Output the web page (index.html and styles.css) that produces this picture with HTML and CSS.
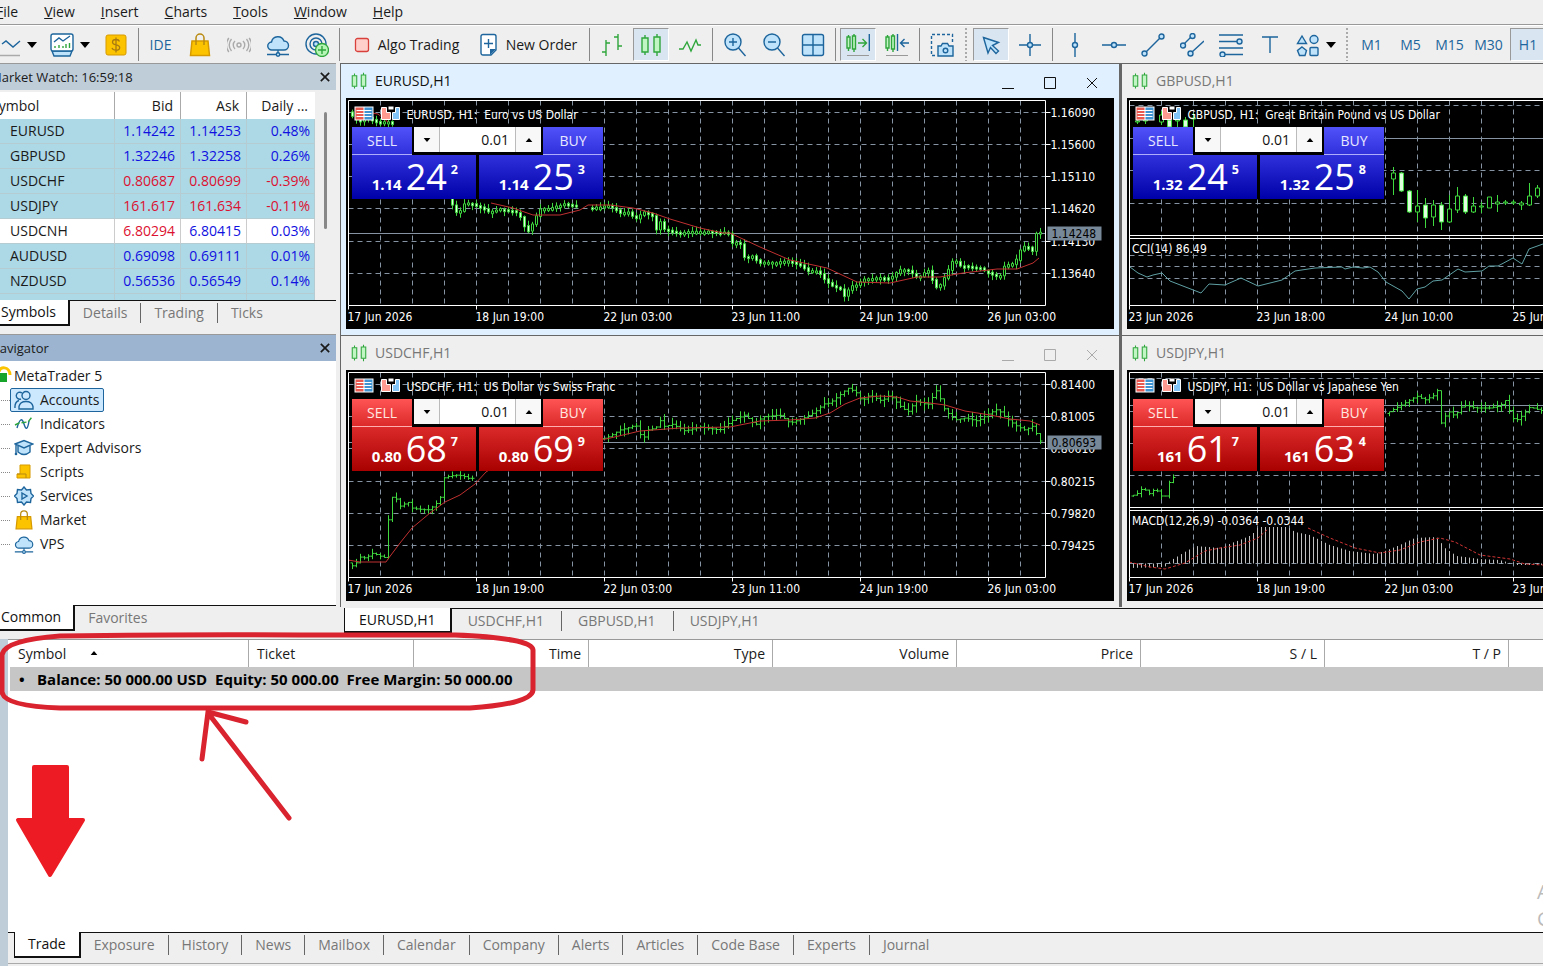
FILE: index.html
```html
<!DOCTYPE html>
<html lang="en">
<head>
<meta charset="utf-8">
<title>MetaTrader 5</title>
<link rel="stylesheet" href="styles.css">
</head>
<body>
<svg class="defs" aria-hidden="true">
  <symbol id="i-candles" viewBox="0 0 24 24"><path d="M6 2v3M6 19v3M18 1v3M18 19v4" class="gs"/><path d="M3 5h6v14H3zM15 4h6v15h-6z" class="gs gf"/></symbol>
  <symbol id="i-cloud" viewBox="0 0 24 24"><path d="M6 17a4 4 0 0 1-.5-8A6.500 6.500 0 0 1 18 8a4.500 4.500 0 0 1 0 9z" class="bs bf"/><path d="M12 17v3M1 21.500h9M14 21.500h9" class="bs"/><circle cx="12" cy="21.500" r="1.700" class="bs bf"/></symbol>
  <symbol id="i-bag" viewBox="0 0 24 24"><path d="M4 8h16l1.500 14.500h-19z" fill="#fcc400" stroke="#d79a00" stroke-width="1.500"/><path d="M8 12V5a4 4 0 0 1 8 0v7" fill="none" stroke="#b98a10" stroke-width="1.500"/></symbol>
  <symbol id="i-down" viewBox="0 0 10 6"><path d="M0 0h10L5 6z"/></symbol>
  <symbol id="i-x" viewBox="0 0 12 12"><path d="M1 1l10 10M11 1L1 11" fill="none" stroke="currentColor"/></symbol>
</svg>

<div class="app">
  <nav class="menu">
    <button><u>F</u>ile</button><button><u>V</u>iew</button><button><u>I</u>nsert</button><button><u>C</u>harts</button><button><u>T</u>ools</button><button><u>W</u>indow</button><button><u>H</u>elp</button>
  </nav>

  <div class="toolbar">
    <button class="tb drop" aria-label="Line tools"><svg class="ic" viewBox="0 0 24 24"><path d="M2 2v21M2 22.500h21" stroke="#aaa" fill="none" stroke-width="1.300"/><path d="M5 11l4-3 7 6 7-6" class="bs"/></svg><svg class="dn"><use href="#i-down"/></svg></button>
    <button class="tb drop" aria-label="Templates"><svg class="ic" viewBox="0 0 24 24"><path d="M2 18l2 5h16l2-5z" class="bs bf"/><rect x="1" y="1" width="22" height="17" rx="2" fill="#fff" stroke="#1d659c" stroke-width="1.400"/><path d="M4 9l5-4 4 3 7-5" class="bs"/><path d="M5 15v-2M9 15v-3M13 15v-2M16 15v-4M19.500 15v-5" class="gs"/></svg><svg class="dn"><use href="#i-down"/></svg></button>
    <button class="tb" aria-label="Deposit"><svg class="ic" viewBox="0 0 24 24"><rect x="2" y="2" width="20" height="20" rx="2" fill="#fcc400" stroke="#d79a00"/><path d="M15.500 8.500C15 7 13.500 6.500 12 6.500c-2 0-3.500 1-3.500 2.700 0 3.600 7.200 1.800 7.200 5.300 0 1.800-1.600 2.700-3.700 2.700-2 0-3.500-.7-4-2.300M12 4.500v15" fill="none" stroke="#a87a10" stroke-width="1.300"/></svg></button>
    <i class="sep"></i>
    <button class="tb blue">IDE</button>
    <button class="tb" aria-label="Market"><svg class="ic"><use href="#i-bag"/></svg></button>
    <button class="tb" aria-label="Signals"><svg class="ic" viewBox="0 0 24 24"><g fill="none" stroke="#aaa" stroke-width="1.400"><circle cx="12" cy="12" r="2"/><path d="M8 16a5.500 5.500 0 0 1 0-8M16 8a5.500 5.500 0 0 1 0 8M4.500 18a9 9 0 0 1 0-12M19.500 6a9 9 0 0 1 0 12M1.800 19a12 12 0 0 1 0-14M22.200 5a12 12 0 0 1 0 14"/></g></svg></button>
    <button class="tb" aria-label="Virtual hosting"><svg class="ic"><use href="#i-cloud"/></svg></button>
    <button class="tb" aria-label="Connect"><svg class="ic" viewBox="0 0 24 24"><circle cx="11" cy="11" r="10" class="bs"/><circle cx="11" cy="11" r="6" class="bs"/><circle cx="11" cy="11" r="2.500" class="bs bf"/><circle cx="17" cy="17" r="6.500" fill="#b6f5b6" stroke="#2fa63c" stroke-width="1.300"/><path d="M17 13v8M13 17h8" class="gs"/></svg></button>
    <i class="sep"></i>
    <button class="tb label algo"><svg class="ic s16" viewBox="0 0 16 16"><rect x="1.500" y="1.500" width="13" height="13" rx="2" fill="#ffd0cb" stroke="#d8403c" stroke-width="1.300"/></svg>Algo Trading</button>
    <button class="tb label order"><svg class="ic narrow" viewBox="0 0 18 24"><path d="M3 1.500h11a2 2 0 0 1 2 2V17l-5 5H3a2 2 0 0 1-2-2V3.500a2 2 0 0 1 2-2z" fill="#fff" stroke="#1d659c" stroke-width="1.400"/><path d="M16 16h-6v6z" fill="#1d659c"/><path d="M8.500 6v9M4 10.500h9" class="bs"/></svg>New Order</button>
    <i class="sep"></i>
    <button class="tb" aria-label="Bar chart"><svg class="ic" viewBox="0 0 24 24"><path d="M6 7v16M6 10h4M2 19h4M18 1v16M14 4h4M18 13h4" class="gs"/></svg></button>
    <button class="tb on" aria-label="Candlesticks"><svg class="ic"><use href="#i-candles"/></svg></button>
    <button class="tb" aria-label="Line chart"><svg class="ic" viewBox="0 0 24 24"><path d="M1 16h4l4-7 4 9 5-11 2 5h3" class="gs"/></svg></button>
    <i class="sep"></i>
    <button class="tb" aria-label="Zoom in"><svg class="ic" viewBox="0 0 24 24"><circle cx="10" cy="9" r="8" class="bs bf"/><path d="M6 9h8M10 5v8M15.500 15l7 8" class="bs"/></svg></button>
    <button class="tb" aria-label="Zoom out"><svg class="ic" viewBox="0 0 24 24"><circle cx="10" cy="9" r="8" class="bs bf"/><path d="M6 9h8M15.500 15l7 8" class="bs"/></svg></button>
    <button class="tb" aria-label="Tile windows"><svg class="ic" viewBox="0 0 24 24"><rect x="1.500" y="1.500" width="21" height="21" rx="2" class="bs bf"/><path d="M12 2v20M2 12h20" class="bs"/></svg></button>
    <i class="sep"></i>
    <button class="tb on" aria-label="Auto scroll"><svg class="ic" viewBox="0 0 24 24"><path d="M2.500 2v16M8 1v18" class="gs"/><path d="M1 4h3v11H1zM6.500 3h3v13h-3z" class="gs gf"/><path d="M12 10h8M16.500 6l4 4-4 4" class="gs"/><path d="M23.300 1v17" class="bs"/><path d="M1 22.500h22" stroke="#999"/></svg></button>
    <button class="tb" aria-label="Chart shift"><svg class="ic" viewBox="0 0 24 24"><path d="M2.500 2v16M8 1v18" class="gs"/><path d="M1 4h3v11H1zM6.500 3h3v13h-3z" class="gs gf"/><path d="M12.500 1v17M24 10h-8M19.500 6l-4 4 4 4" class="bs"/><path d="M1 22.500h22" stroke="#999"/></svg></button>
    <i class="sep"></i>
    <button class="tb" aria-label="Screenshot"><svg class="ic" viewBox="0 0 24 24"><path d="M5 22.500H1.500v-21h21V9" class="bs" stroke-dasharray="3 2"/><path d="M8 13h3l1.500-2.500h5L19 13h4v10H8z" class="bs bf"/><circle cx="15.500" cy="17.500" r="2.300" class="bs"/></svg></button>
    <i class="sep dot"></i>
    <button class="tb on" aria-label="Cursor"><svg class="ic" viewBox="0 0 24 24"><path d="M4.500 4.500l15 5-6 3 6 5.500-2.500 2.500-5.500-6-2.500 5.500z" class="bs bf"/></svg></button>
    <button class="tb" aria-label="Crosshair"><svg class="ic" viewBox="0 0 24 24"><path d="M12 1v8M12 15v8M1 12h8M15 12h8" class="bs"/><circle cx="12" cy="12" r="2.500" class="bs bf"/></svg></button>
    <i class="sep"></i>
    <button class="tb" aria-label="Vertical line"><svg class="ic" viewBox="0 0 24 24"><path d="M12 0v9M12 15v9" class="bs"/><circle cx="12" cy="12" r="2.500" class="bs bf"/></svg></button>
    <button class="tb" aria-label="Horizontal line"><svg class="ic" viewBox="0 0 24 24"><path d="M0 12h9M15 12h9" class="bs"/><circle cx="12" cy="12" r="2.500" class="bs bf"/></svg></button>
    <button class="tb" aria-label="Trend line"><svg class="ic" viewBox="0 0 24 24"><path d="M5 19L19 5" class="bs"/><circle cx="3.500" cy="20.500" r="2.500" class="bs bf"/><circle cx="20.500" cy="3.500" r="2.500" class="bs bf"/></svg></button>
    <button class="tb" aria-label="Channel"><svg class="ic" viewBox="0 0 24 24"><path d="M4 11l7-7M12 19L24 8" class="bs"/><circle cx="3" cy="12.500" r="2.500" class="bs bf"/><circle cx="12.500" cy="3" r="2.500" class="bs bf"/><circle cx="10.500" cy="20.500" r="2.500" class="bs bf"/></svg></button>
    <button class="tb" aria-label="Fibonacci"><svg class="ic" viewBox="0 0 24 24"><path d="M0 2h24M0 8.500h18M0 15h24M6 21.500h18" class="bs"/><circle cx="20.500" cy="8.500" r="2.500" class="bs bf"/><circle cx="3.500" cy="21.500" r="2.500" class="bs bf"/></svg></button>
    <button class="tb" aria-label="Text"><svg class="ic" viewBox="0 0 24 24"><path d="M4 4h16M12 4v16" class="bs"/></svg></button>
    <button class="tb drop" aria-label="Shapes"><svg class="ic" viewBox="0 0 24 24"><path d="M6 3l4.500 7.500h-9zM6 14l4.500 3.500L9 22.500H3.500l-2-5z" class="bs bf"/><circle cx="18" cy="6.500" r="4" class="bs bf"/><rect x="14" y="14.500" width="8" height="8" rx="1" class="bs bf"/></svg><svg class="dn"><use href="#i-down"/></svg></button>
    <i class="sep dot"></i>
    <button class="tb blue">M1</button><button class="tb blue">M5</button><button class="tb blue">M15</button><button class="tb blue">M30</button><button class="tb blue on">H1</button>
  </div>

  <main class="work">
    <aside class="side">
      <section class="watch">
        <header class="cap"><span>Market Watch: 16:59:18</span><button aria-label="Close Market Watch"><svg class="x bold"><use href="#i-x"/></svg></button></header>
        <div class="quotes">
          <table>
            <colgroup><col class="c-sym"><col class="c-num"><col class="c-num"><col class="c-day"></colgroup>
            <thead><tr><th>Symbol</th><th>Bid</th><th>Ask</th><th>Daily ...</th></tr></thead>
            <tbody>
              <tr><td>EURUSD</td><td>1.14242</td><td>1.14253</td><td>0.48%</td></tr>
              <tr><td>GBPUSD</td><td>1.32246</td><td>1.32258</td><td>0.26%</td></tr>
              <tr><td>USDCHF</td><td class="r">0.80687</td><td class="r">0.80699</td><td class="r">-0.39%</td></tr>
              <tr><td>USDJPY</td><td class="r">161.617</td><td class="r">161.634</td><td class="r">-0.11%</td></tr>
              <tr class="plain"><td>USDCNH</td><td class="r">6.80294</td><td>6.80415</td><td>0.03%</td></tr>
              <tr><td>AUDUSD</td><td>0.69098</td><td>0.69111</td><td>0.01%</td></tr>
              <tr><td>NZDUSD</td><td>0.56536</td><td>0.56549</td><td>0.14%</td></tr>
              <tr><td></td><td></td><td></td><td></td></tr>
            </tbody>
          </table>
          <div class="track"><i class="thumb"></i></div>
        </div>
        <div class="tabs"><button class="active first">Symbols</button><button>Details</button><button>Trading</button><button>Ticks</button></div>
      </section>

      <section class="nav">
        <header class="cap strong"><span>Navigator</span><button aria-label="Close Navigator"><svg class="x bold"><use href="#i-x"/></svg></button></header>
        <ul class="tree">
          <li class="root"><svg viewBox="0 0 20 20"><path d="M7 6c0-6 11-6 11 3" fill="none" stroke="#fcc400" stroke-width="3"/><path d="M3 7h12v9H3z" fill="#17a42a"/></svg><span>MetaTrader 5</span></li>
          <li><i></i><a href="#accounts" class="sel"><svg viewBox="0 0 20 20"><circle cx="12" cy="5.500" r="4" class="bs"/><path d="M5 19v-2.500q1-5 7-5t7 5V19zM7 9a3.500 3.500 0 1 1 1-6M1 18q-.5-6 4-7.500" class="bs"/></svg>Accounts</a></li>
          <li><i></i><a href="#indicators"><svg viewBox="0 0 20 20"><path d="M3 14q4-14 7-4t5-3" class="bs"/><path d="M1 11l4-2 9-1 4-5" class="gs" stroke-dasharray="5 2"/></svg>Indicators</a></li>
          <li><i></i><a href="#experts"><svg viewBox="0 0 20 20"><path d="M4 8v6q6 5 12 0V8" class="bs bf"/><path d="M1 6l9-3.500L19 6l-9 4zM2 7v9" class="bs bf"/><circle cx="2" cy="16" r="1.300" fill="#1d659c"/></svg>Expert Advisors</a></li>
          <li><i></i><a href="#scripts"><svg viewBox="0 0 20 20"><path d="M6 3h10v13H3v-4h3z" fill="#fcc400" stroke="#d79a00"/><path d="M3 12h9v4" fill="none" stroke="#b98a10"/></svg>Scripts</a></li>
          <li><i></i><a href="#services"><svg viewBox="0 0 20 20"><path d="M10 1l2.500 3 4-.5.500 4 2.500 2.500-2.500 2.500-.5 4-4-.5L10 19l-2.500-3-4 .5-.5-4L.5 10 3 7.500l.5-4 4 .5z" class="bs bf"/><path d="M8 7l5 3-5 3z" class="bs"/></svg>Services</a></li>
          <li><i></i><a href="#market"><svg><use href="#i-bag"/></svg>Market</a></li>
          <li><i></i><a href="#vps"><svg><use href="#i-cloud"/></svg>VPS</a></li>
        </ul>
        <div class="tabs"><button class="active first">Common</button><button>Favorites</button></div>
      </section>
    </aside>

    <section class="mdi">
      <div class="windows">
        <article class="win active">
          <header><svg class="wi"><use href="#i-candles"/></svg><h2>EURUSD,H1</h2><button aria-label="Minimize"><svg class="x" viewBox="0 0 12 12"><path d="M0 11.500h12" stroke="currentColor"/></svg></button><button aria-label="Maximize"><svg class="x" viewBox="0 0 12 12"><path d="M.5.500h11v11H.500z" fill="none" stroke="currentColor"/></svg></button><button aria-label="Close"><svg class="x"><use href="#i-x"/></svg></button></header>
          <div class="chart"><svg class="plot" id="eurusd" viewBox="346 98 769 231"></svg>
            <div class="trade"><button class="side-btn">SELL</button><div class="lot"><button aria-label="Less"><svg class="ar"><use href="#i-down"/></svg></button><input aria-label="Volume" value="0.01"><button aria-label="More"><svg class="ar up"><use href="#i-down"/></svg></button></div><button class="side-btn">BUY</button>
              <div class="prices"><button class="price">1.14<b>24</b><sup>2</sup></button><button class="price">1.14<b>25</b><sup>3</sup></button></div></div></div>
        </article>
        <article class="win">
          <header><svg class="wi"><use href="#i-candles"/></svg><h2>GBPUSD,H1</h2></header>
          <div class="chart"><svg class="plot" id="gbpusd" viewBox="1127 98 769 231"></svg>
            <div class="trade"><button class="side-btn">SELL</button><div class="lot"><button aria-label="Less"><svg class="ar"><use href="#i-down"/></svg></button><input aria-label="Volume" value="0.01"><button aria-label="More"><svg class="ar up"><use href="#i-down"/></svg></button></div><button class="side-btn">BUY</button>
              <div class="prices"><button class="price">1.32<b>24</b><sup>5</sup></button><button class="price">1.32<b>25</b><sup>8</sup></button></div></div></div>
        </article>
        <article class="win">
          <header><svg class="wi"><use href="#i-candles"/></svg><h2>USDCHF,H1</h2><button aria-label="Minimize"><svg class="x" viewBox="0 0 12 12"><path d="M0 11.500h12" stroke="currentColor"/></svg></button><button aria-label="Maximize"><svg class="x" viewBox="0 0 12 12"><path d="M.5.500h11v11H.500z" fill="none" stroke="currentColor"/></svg></button><button aria-label="Close"><svg class="x"><use href="#i-x"/></svg></button></header>
          <div class="chart"><svg class="plot" id="usdchf" viewBox="346 370 769 231"></svg>
            <div class="trade red"><button class="side-btn">SELL</button><div class="lot"><button aria-label="Less"><svg class="ar"><use href="#i-down"/></svg></button><input aria-label="Volume" value="0.01"><button aria-label="More"><svg class="ar up"><use href="#i-down"/></svg></button></div><button class="side-btn">BUY</button>
              <div class="prices"><button class="price">0.80<b>68</b><sup>7</sup></button><button class="price">0.80<b>69</b><sup>9</sup></button></div></div></div>
        </article>
        <article class="win">
          <header><svg class="wi"><use href="#i-candles"/></svg><h2>USDJPY,H1</h2></header>
          <div class="chart"><svg class="plot" id="usdjpy" viewBox="1127 370 769 231"></svg>
            <div class="trade red"><button class="side-btn">SELL</button><div class="lot"><button aria-label="Less"><svg class="ar"><use href="#i-down"/></svg></button><input aria-label="Volume" value="0.01"><button aria-label="More"><svg class="ar up"><use href="#i-down"/></svg></button></div><button class="side-btn">BUY</button>
              <div class="prices"><button class="price">161<b>61</b><sup>7</sup></button><button class="price">161<b>63</b><sup>4</sup></button></div></div></div>
        </article>
      </div>
      <div class="tabs wide"><button class="active">EURUSD,H1</button><button>USDCHF,H1</button><button>GBPUSD,H1</button><button>USDJPY,H1</button></div>
    </section>
  </main>

  <section class="toolbox">
    <div class="body">
      <table>
        <colgroup><col class="t1"><col class="t2"><col class="t3"><col class="t4"><col class="t4"><col class="t4"><col class="t4"><col class="t4"><col></colgroup>
        <thead><tr><th>Symbol<svg class="ar up sort"><use href="#i-down"/></svg></th><th>Ticket</th><th>Time</th><th>Type</th><th>Volume</th><th>Price</th><th>S / L</th><th>T / P</th><th></th></tr></thead>
        <tbody><tr><td colspan="9"><span class="bul">•</span>Balance: 50 000.00 USD&nbsp; Equity: 50 000.00&nbsp; Free Margin: 50 000.00</td></tr></tbody>
      </table>
      <div class="mark">Activate Windows<br>Go to Settings</div>
    </div>
    <div class="tabs low"><button class="active">Trade</button><button>Exposure</button><button>History</button><button>News</button><button>Mailbox</button><button>Calendar</button><button>Company</button><button>Alerts</button><button>Articles</button><button>Code Base</button><button>Experts</button><button>Journal</button></div>
  </section>
</div>

<svg class="notes" width="560" height="900" viewBox="0 0 560 900" aria-hidden="true">
  <g fill="none" stroke="#d9232e" stroke-width="5" stroke-linecap="round">
    <path d="M60 636Q200 634 300 635H455Q532 638 533 650V690Q532 704 470 708H60Q4 706 2 692V655Q4 640 60 636z"/>
    <path d="M289 818L208 713M202 759l6-47 38 10"/>
  </g>
  <path d="M34 767h33v53h16L50 875 18 820h16z" fill="#ed1c24" stroke="#ed1c24" stroke-width="4" stroke-linejoin="round"/>
</svg>
<script src="charts.js"></script>
</body>
</html>
```

FILE: styles.css
```css
* { box-sizing: border-box; }
body { margin: 0; overflow: hidden; background: #efefef; color: #1a1a1a; font: 14px/20px "Open Sans", "Noto Sans", sans-serif; }
button, input { font: inherit; color: inherit; border: 0; padding: 0; margin: 0; background: none; }
h2, ul { margin: 0; padding: 0; font-weight: 400; list-style: none; }
table { border-collapse: separate; border-spacing: 0; table-layout: fixed; }
td, th { padding: 0; font-weight: 400; white-space: nowrap; }
svg { display: block; flex: none; }
.defs { position: absolute; width: 0; height: 0; }
.bs { fill: none; stroke: #1d659c; stroke-width: 1.4; }
.bf { fill: #bfe3fb; }
.gs { fill: none; stroke: #2fa63c; stroke-width: 1.4; }
.gf { fill: #c2f5c4; }

.app { margin-left: -16px; min-height: 100vh; display: flex; flex-direction: column; overflow: hidden; }

.menu { height: 25px; padding-left: 12px; display: flex; gap: 26px; border-bottom: 1px solid #999; }
.toolbar { height: 38px; padding: 2px 0 2px 6px; display: flex; border-top: 1px solid #fff; }
.tb { flex: none; width: 39px; display: flex; align-items: center; justify-content: center; }
.tb.drop { width: 53px; gap: 6px; }
.tb.label { gap: 8px; }
.tb.algo { width: 129px; }
.tb.order { width: 115px; }
.tb.blue { color: #1d659c; }
.tb.on { width: 36px; margin: 0 1px 0 2px; background: #d9e5f1; border: 1px solid #fff; border-top-color: #999; border-left-color: #999; }
.ic { width: 24px; height: 24px; }
.ic.s16 { width: 16px; height: 16px; }
.ic.narrow { width: 18px; }
.dn { width: 10px; height: 6px; }
.sep { flex: none; width: 6px; background: linear-gradient(#888, #888) center / 1px 100% no-repeat; }
.sep.dot { width: 10px; background: repeating-linear-gradient(#aaa 0 2px, transparent 2px 4px) center / 2px 100% no-repeat; }

.work { display: flex; height: 576px; }
.side { flex: none; width: 352px; margin-right: 4px; display: flex; flex-direction: column; }
.cap { height: 27px; padding: 0 6px; display: flex; align-items: center; justify-content: space-between; background: #bfcdd9; border-top: 1px solid #999; font-size: 13px; }
.cap.strong { background: #9cb4cf; }
.x { width: 12px; height: 12px; overflow: visible; }
.x.bold { width: 10px; height: 10px; stroke-width: 2; }
.quotes { display: flex; align-items: flex-start; height: 210px; padding-top: 2px; overflow: hidden; }
.quotes table { width: 331px; }
.c-sym { width: 131px; }
.c-num { width: 66px; }
.c-day { width: 68px; }
.quotes th { height: 27px; background: #fff; text-align: right; padding-right: 7px; border-right: 1px solid #aaa; }
.quotes th:first-child { text-align: left; padding-left: 7px; }
.quotes th:last-child { border: 0; }
.quotes td { height: 25px; background: #add8e6; color: #1010e0; text-align: right; padding-right: 5px; border-bottom: 1px solid #b5ccd3; border-right: 1px solid #b5ccd3; }
.quotes td:first-child { text-align: left; padding-left: 26px; color: #1a1a1a; }
.quotes td:last-child { padding-right: 4px; }
.quotes td.r { color: #dc1030; }
.quotes .plain td { background: #fff; border-right-color: #ccc; }
.track { flex: 1; padding: 20px 9px 0; }
.thumb { display: block; width: 3px; height: 117px; border-radius: 2px; background: #888; }

.tabs { display: flex; border-top: 1px solid #111; height: 34px; }
.tabs button { height: 20px; margin-top: 2px; padding: 0 13px; color: #777; border-right: 1px solid #666; }
.tabs button:last-child { border: 0; }
.tabs .active { height: 26px; margin-top: -1px; padding: 0 12px; background: #fff; color: #111; border: 1px solid #111; border-top: 0; border-right-width: 2px; border-bottom-width: 2px; }
.tabs .first { padding-left: 16px; }
.nav { display: flex; flex-direction: column; flex: 1; }
.tree { flex: 1; background: #fff; padding: 3px 0 0 8px; }
.tree li { height: 24px; display: flex; align-items: center; }
.tree svg { width: 20px; height: 20px; }
.tree .root svg { margin-right: 2px; }
.tree i { width: 18px; border-top: 1px dotted #888; }
.tree a { display: flex; align-items: center; gap: 6px; height: 24px; padding: 0 3px; color: inherit; text-decoration: none; border: 1px solid transparent; }
.tree .sel { background: #cce8ff; border-color: #1d659c; border-radius: 2px; }

.mdi { flex: 1; min-width: 0; display: flex; flex-direction: column; overflow: hidden; }
.windows { display: grid; grid-template-columns: 781px minmax(781px, 1fr); grid-auto-rows: 272px; }
.win { border: 1px solid #666; border-width: 1px 2px 0 1px; padding: 0 5px 5px; background: #efefef; color: #777; }
.win.active { background: #e0f0fe; color: #111; }
.win header { display: flex; align-items: center; height: 34px; padding: 0 1px 0 4px; }
.wi { width: 18px; height: 20px; margin-right: 7px; }
.win h2 { flex: 1; font-size: 14px; }
.win header button { width: 42px; display: flex; justify-content: center; padding-top: 4px; color: #aaa; }
.win.active header button { color: #111; }
.chart { position: relative; background: #000; height: 231px; overflow: hidden; }
.plot { width: 769px; height: 231px; font: 12px "DejaVu Sans Condensed", "Noto Sans", sans-serif; }
.trade { position: absolute; left: 6px; top: 29px; width: 251px; display: grid; grid-template-columns: 60px minmax(0, 1fr) 60px; column-gap: 2px; background: #000; color: #e8e8ff; --a: #5252fa; --b: #3131dc; --c: #0000a8; }
.trade.red { color: #ffe8e0; --a: #ff5454; --b: #dc2a2a; --c: #a80000; }
.side-btn { height: 28px; background: linear-gradient(var(--a), var(--b)); border-bottom: 1px solid #ffffff88; }
.lot { display: flex; height: 25px; background: #fff; color: #111; }
.lot button { flex: none; width: 25px; display: flex; align-items: center; justify-content: center; background: #f8f8f8; }
.lot input { flex: 1; width: 0; min-width: 0; text-align: right; padding-right: 6px; border: 1px solid #bbb; border-width: 0 1px; }
.ar { width: 8px; height: 4px; }
.ar.up { transform: rotate(180deg); }
.prices { grid-column: 1 / 4; display: grid; grid-template-columns: 1fr 1fr; column-gap: 3px; }
.price { height: 44px; background: linear-gradient(var(--b), var(--c)); color: #fff; display: flex; align-items: baseline; justify-content: flex-end; padding-right: 18px; font: 700 15px/44px "Open Sans", "Noto Sans", sans-serif; }
.price b { font-size: 36px; font-weight: 400; margin: 0 4px; }
.price sup { align-self: flex-start; line-height: 30px; }
.tabs.wide { margin: 1px 0 0 4px; height: 32px; }
.tabs.wide button { padding: 0 17px 0 16px; }
.tabs.wide .active { padding: 0 14px; height: 25px; }

.toolbox { flex: 1; display: flex; flex-direction: column; border-left: 24px solid #bfcdd9; padding-bottom: 2px; }
.body { position: relative; flex: 1; background: #fff; border-top: 1px solid #999; padding-left: 2px; }
.body table { width: 100%; }
.t1 { width: 239px; }
.t2 { width: 165px; }
.t3 { width: 175px; }
.t4 { width: 184px; }
.body th { height: 27px; text-align: right; padding-right: 7px; border-right: 1px solid #aaa; }
.body th:nth-child(-n+2) { text-align: left; padding-left: 8px; }
.body th:last-child { border: 0; }
.sort { display: inline-block; margin: 0 0 4px 24px; }
.body td { height: 24px; background: #c6c6c6; color: #000; font: 700 15px/20px "Open Sans", "Noto Sans", sans-serif; }
.bul { display: inline-block; width: 27px; padding-left: 9px; }
.mark { position: absolute; left: calc(100% - 6px); bottom: 0; font-size: 20px; line-height: 27px; color: #bbb; white-space: nowrap; }
.tabs.low { height: 32px; padding-left: 6px; border-bottom: 1px solid #aaa; }
.tabs.low button { padding: 0 13px; }
.notes { position: absolute; left: 0; top: 0; pointer-events: none; }
```

FILE: charts.js
```js
const out = {};
const line = (x1, y1, x2, y2, c, extra = '') => `<path d="M${x1} ${y1}L${x2} ${y2}" stroke="${c}" fill="none" ${extra}/>`;
const poly = (pts, c, extra = '') => `<polyline points="${pts}" stroke="${c}" fill="none" ${extra}/>`;
const text = (x, y, s, c = '#fff') => `<text x="${x}" y="${y}" fill="${c}" xml:space="preserve">${s}</text>`;
const GREEN = '#3fd83f', GRID = '#8593a2';

// Piecewise-linear value of a path at x
function at(path, x) {
  for (let i = 0; i < path.length - 1; i++) {
    const [a, b] = path[i], [c, d] = path[i + 1];
    if (x >= a && x <= c) return b + (d - b) * (x - a) / (c - a);
  }
  return path[path.length - 1][1];
}
function random(seed) {
  return () => (seed = (seed * 16807) % 2147483647) / 2147483647;
}
function frame(c) {
  let s = '';
  const bottom = c.top + 205, right = c.left + 697;
  for (let x = c.left + 32; x < right; x += 32) s += line(x, c.top, x, bottom, GRID, 'stroke-dasharray="5 4"');
  for (const y of c.rows) s += line(c.left, y, right, y, GRID, 'stroke-dasharray="5 4"');
  s += line(c.left, c.price, right, c.price, GRID);
  return s;
}
function edges(c) {
  const bottom = c.top + 205, right = c.left + 697;
  let s = `<path d="M${c.left} ${c.top}H${right}V${bottom}H${c.left}z" stroke="#fff" fill="none"/>`;
  if (c.split) s += line(c.left, c.split, right, c.split, '#fff') + line(c.left, c.split + 3, right, c.split + 3, '#fff');
  c.dates.forEach((d, i) => { const x = c.left + i * 128; s += line(x, bottom, x, bottom + 4, '#fff') + text(x - 1, bottom + 15, d); });
  (c.scale || []).forEach((v, i) => { s += line(right, c.rows[i], right + 5, c.rows[i], '#fff') + text(right + 5, c.rows[i] + 4, v); });
  if (c.tag) s += `<path d="M${right + 2} ${c.price - 7}h54v14h-54z" fill="#778899"/>` + text(right + 6, c.price + 4, c.tag, '#000');
  const x = c.left + 7, y = c.top + 7;
  s += `<path d="M${x - 1} ${y - 1}h19v14h-19z" fill="#fff"/><path d="M${x} ${y}h8v12h-8z" fill="#e85a50"/><path d="M${x + 9} ${y}h8v12h-8z" fill="#3f93d0"/><path d="M${x + 1} ${y + 3}h15M${x + 1} ${y + 6}h15M${x + 1} ${y + 9}h15" stroke="#fff"/>`;
  s += `<path d="M${x + 26} ${y}h5v5h4v7h-9z" fill="#ff9a90" stroke="#fff"/><path d="M${x + 37} ${y + 5}h3v-5h4v12h-7z" fill="#80c4f8" stroke="#fff"/><path d="M${x + 33} ${y - 1}h5v3h-5z" fill="#fff"/>`;
  return s + text(c.left + 58, c.top + 18, c.title);
}
function candles(path, x0, x1, seed) {
  const r = random(seed);
  let s = '';
  for (let x = x0; x <= x1; x += 4) {
    const o = at(path, x - 4), c = at(path, x), t = Math.min(o, c) - r(), b = Math.max(o, c, t + 2) + r();
    s += line(x, (t - 1 - r() * 4).toFixed(1), x, (b + 1 + r() * 4).toFixed(1), GREEN);
    s += `<path d="M${x - 1} ${t.toFixed(1)}h2V${b.toFixed(1)}h-2z" stroke="${GREEN}" fill="${c > o ? '#dfffdf' : '#000'}"/>`;
  }
  return s;
}
function bars(path, x0, x1, seed, size) {
  const r = random(seed);
  let s = '';
  for (let x = x0; x <= x1; x += 4) {
    const o = at(path, x - 4), c = at(path, x);
    s += `<path d="M${x} ${(Math.min(o, c) - r() * size).toFixed(1)}V${(Math.max(o, c) + r() * size).toFixed(1)}M${x - 2} ${o.toFixed(1)}h2M${x} ${c.toFixed(1)}h2" stroke="${GREEN}"/>`;
  }
  return s;
}

const longDates = ['17 Jun 2026', '18 Jun 19:00', '22 Jun 03:00', '23 Jun 11:00', '24 Jun 19:00', '26 Jun 03:00'];

// EURUSD
const eur = { left: 348.5, top: 100.5, rows: [112.5, 144.5, 176.5, 208.5, 241.5, 273.5], price: 233.5, dates: longDates, tag: '1.14248',
  scale: ['1.16090', '1.15600', '1.15110', '1.14620', '1.14130', '1.13640'], title: 'EURUSD, H1:&#160; Euro vs US Dollar' };
const eurPath = [[340,108],[349,112],[355,118],[360,122],[366,117],[378,123],[392,122],[400,150],[440,180],[448,196],[452,204],[456,212],[460,212],[464,204],[470,203],[480,207],[490,212],[500,209],[510,211],[516,212],[522,219],[526,231],[529,231],[534,221],[540,210],[546,209],[555,207],[565,204],[575,206],[592,208],[600,207],[610,206],[620,213],[628,212],[636,219],[644,212],[652,214],[656,231],[660,221],[664,229],[672,232],[680,234],[690,232],[710,232],[722,233],[728,232],[732,243],[740,243],[745,259],[752,256],[760,263],[775,263],[790,261],[800,265],[808,271],[818,271],[825,280],[833,286],[840,289],[845,297],[850,287],[856,286],[864,279],[880,278],[890,279],[900,270],[908,270],[918,278],[928,270],[935,285],[938,290],[945,277],[950,267],[954,259],[960,266],[980,268],[990,274],[1000,277],[1005,265],[1013,264],[1018,258],[1021,249],[1026,246],[1033,251],[1037,231],[1042,234]];
out.eurusd = frame(eur) + candles(eurPath, 352.5, 392.5, 7) + candles(eurPath, 452.5, 576.5, 17) + candles(eurPath, 592.5, 1041, 31)
  + poly('366,112 378,114 388,122', '#c03030') + poly('491,203 513,208 533,215 560,215 580,210 588,205 610,205 633,208 653,213 670,219 700,228 723,233 730,233 760,247 790,260 827,268 857,282 890,283 917,277 940,277 963,273 997,269 1017,269 1033,263 1039,258', '#c03030') + edges(eur);

// GBPUSD with CCI
const gbp = { left: 1129.5, top: 100.5, split: 235.5, rows: [105.5, 170.5, 203.5, 255.5, 266.5, 278.5], price: 138.5,
  dates: ['23 Jun 2026', '23 Jun 18:00', '24 Jun 10:00', '25 Jun 02:00'], title: 'GBPUSD, H1:&#160; Great Britain Pound vs US Dollar' };
const gbpBars = [[1137,121,122,116,124],[1145,120,121,116,124],[1161,115,122,111,125],[1169,120,127,118,127,1],[1177,120,121,118,127],[1185,120,127,117,127,1],[1193,118,119,113,127],[1393,173,179,167,195],[1401,173,191,172,192,1],[1409,191,212,190,213,1],[1417,206,212,190,222],[1425,205,218,198,228,1],[1433,205,217,200,226],[1441,205,222,202,230,1],[1449,209,222,195,223],[1457,196,210,187,213],[1465,196,212,194,214,1],[1473,206,212,197,213],[1481,206,207,202,213],[1489,197,208,197,208],[1497,202,204,195,212],[1505,202,203,200,205],[1513,202,203,200,205],[1521,203,205,201,210],[1529,196,205,183,206],[1537,188,196,185,198]];
out.gbpusd = frame(gbp) + gbpBars.map(([x, t, b, h, l, f]) => line(x + 0.5, h, x + 0.5, l, GREEN) + `<path d="M${x - 1.5} ${t}h4V${b}h-4z" stroke="${GREEN}" fill="${f ? '#dfffdf' : '#000'}"/>`).join('')
  + poly('1130,267 1138,273 1147,277 1153,275 1162,273 1170,281 1201,293 1209,284 1225,285 1241,278 1258,286 1282,280 1295,271 1315,268 1342,267 1345,269 1353,267 1363,268 1370,267 1378,272 1386,282 1402,291 1409,299 1417,289 1425,287 1433,281 1442,280 1458,269 1465,272 1482,271 1489,266 1498,266 1513,258 1522,264 1529,249 1543,244', '#5fa0a4') + edges(gbp) + text(1132, 253, 'CCI(14) 86.49');

// USDCHF
const chf = { left: 348.5, top: 372.5, rows: [384.5, 416.5, 448.5, 481.5, 513.5, 545.5], price: 442.5, dates: longDates, tag: '0.80693',
  scale: ['0.81400', '0.81005', '0.80610', '0.80215', '0.79820', '0.79425'], title: 'USDCHF, H1:&#160; US Dollar vs Swiss Franc' };
const chfPath = [[340,562],[349,563],[354,567],[360,557],[366,558],[373,553],[380,556],[386,558],[388,520],[391,519],[393,490],[398,503],[402,508],[407,500],[412,508],[417,509],[428,510],[434,506],[440,500],[444,478],[450,476],[458,475],[466,477],[472,480],[478,460],[500,450],[606,438],[612,435],[620,430],[628,428],[636,425],[643,440],[648,430],[656,428],[660,420],[665,427],[672,424],[685,431],[700,427],[720,430],[733,420],[745,415],[752,422],[756,425],[762,417],[780,415],[790,423],[802,419],[815,412],[824,404],[830,403],[840,395],[848,388],[856,392],[862,401],[870,395],[882,401],[890,395],[900,406],[908,412],[916,401],[928,405],[937,390],[945,410],[955,420],[965,418],[978,421],[990,413],[998,409],[1005,417],[1015,425],[1025,430],[1033,426],[1040,441]];
out.usdchf = frame(chf) + bars(chfPath, 352.5, 472.5, 5, 5) + bars(chfPath, 604.5, 1041, 23, 7)
  + poly('348,560 360,562 386,562 388,559 400,543 412,528 430,513 445,502 460,495 475,484 486,472 520,450 606,439 640,431 680,428 730,427 760,421 790,420 815,418 830,413 845,404 860,398 880,396 897,397 910,401 930,403 945,405 965,411 990,415 1010,419 1030,421 1040,425', '#c03030') + edges(chf);

// USDJPY with MACD
const jpy = { left: 1129.5, top: 372.5, split: 507.5, rows: [378.5, 411.5, 443.5, 475.5, 563.5], price: 405.5,
  dates: ['17 Jun 2026', '18 Jun 19:00', '22 Jun 03:00', '23 Jun 11:00'], title: 'USDJPY, H1:&#160; US Dollar vs Japanese Yen' };
const jpyPath = [[1120,496],[1131,496],[1137,494],[1143,488],[1150,494],[1156,488],[1160,496],[1168,496],[1170,478],[1190,475],[1387,413],[1400,406],[1410,400],[1417,396],[1425,400],[1435,395],[1439,388],[1442,430],[1447,410],[1455,416],[1463,405],[1475,408],[1490,408],[1500,406],[1506,400],[1512,418],[1517,420],[1523,415],[1530,407],[1543,411]];
const macd = [[1130,568],[1165,567],[1170,561],[1185,552],[1196,546],[1220,548],[1232,543],[1240,540],[1252,535],[1258,527],[1288,527],[1295,532],[1310,535],[1330,545],[1350,551],[1375,554],[1385,551],[1400,545],[1415,538],[1437,537],[1445,548],[1457,556],[1480,559],[1500,560],[1510,563],[1517,565],[1543,565]];
let hist = '';
for (let x = 1133.5; x < 1545; x += 4) hist += line(x, 563.5, x, at(macd, x).toFixed(1), '#c0c0c0');
out.usdjpy = frame(jpy) + hist + bars(jpyPath, 1133.5, 1173.5, 9, 4) + bars(jpyPath, 1389.5, 1543, 11, 6)
  + poly('1129,562 1150,567 1165,569 1185,563 1205,551 1220,548 1240,545 1258,538 1268,529', '#d03434', 'stroke-dasharray="3 2"')
  + poly('1308,528 1330,538 1355,548 1380,553 1400,550 1420,542 1440,538 1455,542 1480,555 1510,559 1525,564 1543,565', '#d03434', 'stroke-dasharray="3 2"')
  + edges(jpy) + text(1132, 525, 'MACD(12,26,9) -0.0364 -0.0344');

for (const id in out) document.getElementById(id).innerHTML = out[id];
```
